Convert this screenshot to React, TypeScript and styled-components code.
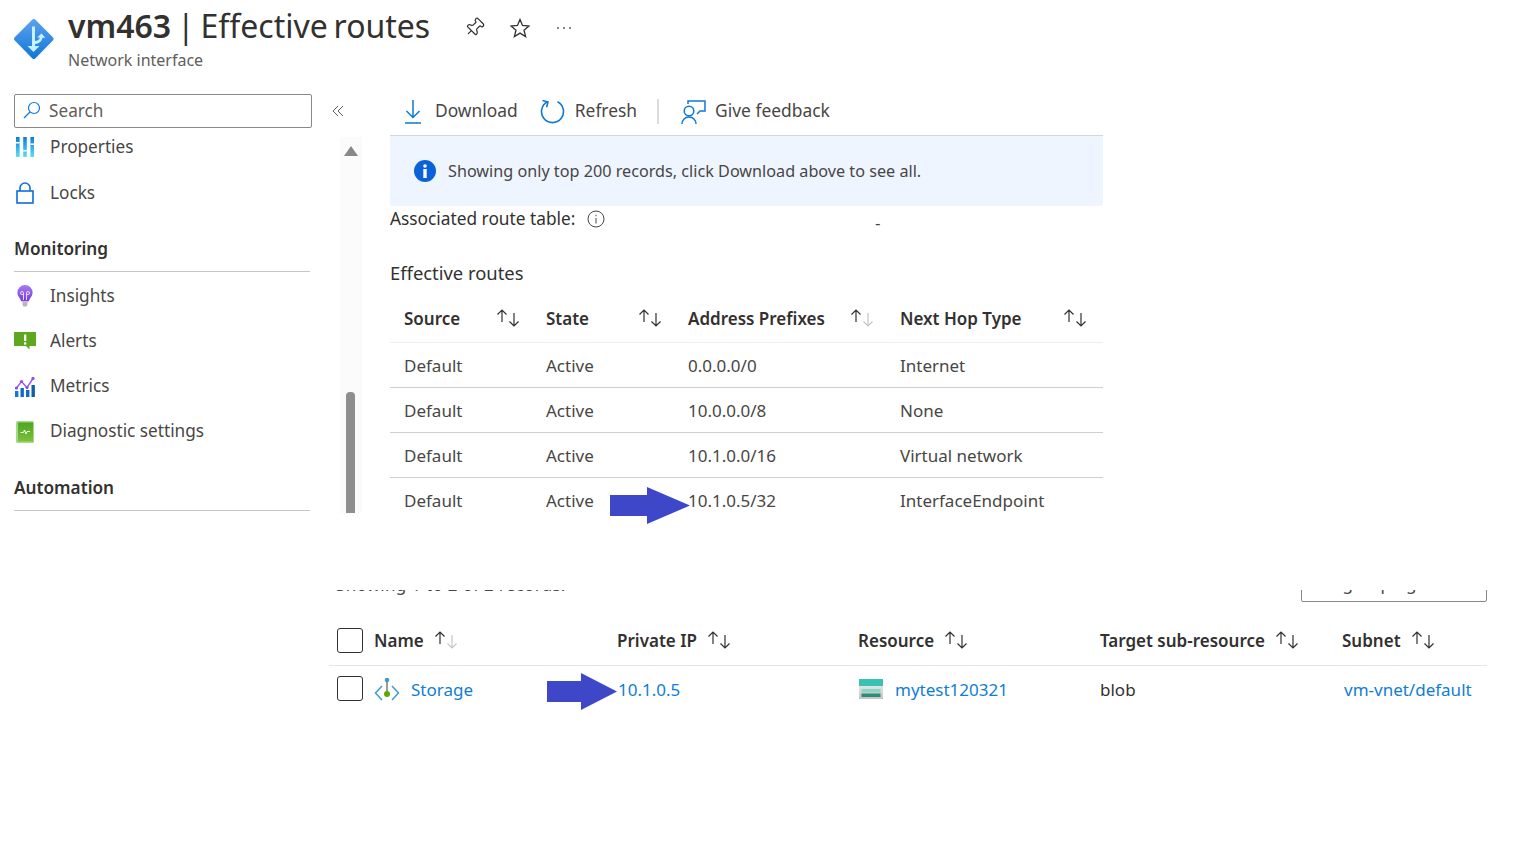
import React from "react";
import styled, { createGlobalStyle } from "styled-components";
import { Pin } from "lucide-react";

const GlobalStyle = createGlobalStyle`
  html, body {
    margin: 0;
    background: #fff;
    overflow: hidden;
  }
  body {
    font-family: "Noto Sans", "Open Sans", sans-serif;
    font-size: 17px;
    color: #323130;
  }
`;

const Page = styled.div`
  position: relative;
  width: 1536px;
  height: 864px;
`;

const Header = styled.header`
  display: flex;
  align-items: flex-start;
  height: 88px;
  padding-left: 14px;
  box-sizing: border-box;
`;

const LogoSlot = styled.div`
  width: 54px;
  padding-top: 19px;
`;

const TitleBlock = styled.div`
  width: 396px;
  padding-top: 4px;
`;

const Title = styled.h1`
  margin: 0;
  font-size: 32px;
  line-height: 44px;
  font-weight: 400;
  word-spacing: -2.5px;
  white-space: nowrap;
  strong {
    font-weight: 600;
  }
`;

const Subtitle = styled.div`
  font-size: 16px;
  line-height: 20px;
  margin-top: 2px;
  color: #605e5c;
`;

const HeaderActions = styled.div`
  display: flex;
  align-items: center;
  gap: 25px;
  padding-top: 17px;
  color: #323130;
`;

const Main = styled.main`
  display: flex;
  align-items: flex-start;
  height: 494px;
  padding-left: 14px;
`;

const Sidebar = styled.nav`
  width: 298px;
  padding-top: 6px;
  font-size: 17.2px;
`;

const SearchBox = styled.div`
  display: flex;
  align-items: center;
  gap: 8px;
  height: 34px;
  box-sizing: border-box;
  padding: 0 0 2px 8px;
  border: 1px solid #8a8886;
  border-radius: 2px;
  color: #605e5c;
`;

const NavGroup = styled.div<{ $gap: number }>`
  display: flex;
  flex-direction: column;
  gap: ${({ $gap }) => $gap}px;
`;

const NavRow = styled.div`
  display: flex;
  align-items: center;
  height: 38px;
  box-sizing: border-box;
  padding-bottom: 2px;
  color: #484644;
`;

const NavIcon = styled.span`
  display: flex;
  justify-content: center;
  width: 22px;
  margin: 2px 14px 0 0;
`;

const NavHeading = styled.div<{ $top: number }>`
  width: 296px;
  margin: ${({ $top }) => $top}px 0 5px;
  padding-bottom: 9px;
  line-height: 26px;
  font-weight: 600;
  border-bottom: 1px solid #c8c6c4;
`;

const CollapseSlot = styled.div`
  width: 28px;
  height: 46px;
  padding-top: 17px;
  display: flex;
  justify-content: flex-end;
  box-sizing: border-box;
  color: #605e5c;
  & > svg {
    margin-right: -4px;
  }
`;

const ScrollTrack = styled.div`
  display: flex;
  flex-direction: column;
  align-items: center;
  width: 22px;
  height: 376px;
  margin: 49px 28px 0 0;
  background: #fbfbfb;
`;

const ScrollUp = styled.div`
  width: 0;
  height: 0;
  margin-top: 9px;
  border-left: 7px solid transparent;
  border-right: 7px solid transparent;
  border-bottom: 10px solid #8a8886;
`;

const ScrollThumb = styled.div`
  width: 9px;
  height: 121px;
  margin: auto 1px 0 0;
  background: #8e8e8e;
  border-radius: 4px 4px 0 0;
`;

const Content = styled.section`
  width: 713px;
`;

const Toolbar = styled.div`
  display: flex;
  align-items: center;
  height: 47px;
  padding-left: 14px;
  border-bottom: 1px solid #d6d6d6;
  font-size: 17.4px;
  color: #484644;
`;

const ToolLabel = styled.span`
  padding-bottom: 3px;
`;

const ToolButton = styled.div<{ $gap: number; $right: number }>`
  display: flex;
  align-items: center;
  gap: ${({ $gap }) => $gap}px;
  margin-right: ${({ $right }) => $right}px;
`;

const ToolDivider = styled.div`
  width: 2px;
  height: 25px;
  margin-right: 22px;
  background: #dcdcdc;
`;

const Banner = styled.div`
  display: flex;
  align-items: center;
  gap: 12px;
  height: 70px;
  padding-left: 24px;
  background: #eef5ff;
  border-radius: 0 0 2px 2px;
  font-size: 16.2px;
  color: #484644;
`;

const AssocRow = styled.div`
  display: flex;
  align-items: center;
  height: 26px;
`;

const AssocLabel = styled.span`
  width: 215px;
  display: flex;
  align-items: center;
  justify-content: space-between;
  white-space: nowrap;
  font-size: 17.3px;
  line-height: 22px;
`;

const AssocValue = styled.span`
  margin-left: 270px;
  padding-top: 6px;
  color: #484644;
`;

const SectionTitle = styled.h2`
  margin: 27px 0 0;
  font-size: 18.4px;
  font-weight: 400;
  line-height: 28px;
`;

const RouteHead = styled.div`
  display: grid;
  grid-template-columns: 116px 116px 186px 187px;
  column-gap: 26px;
  align-items: center;
  height: 56px;
  box-sizing: border-box;
  padding: 7px 0 0 14px;
  border-bottom: 1px solid #eeeeee;
  font-weight: 600;
`;

const HeadCell = styled.div`
  display: flex;
  align-items: center;
  justify-content: space-between;
`;

const RouteRow = styled.div<{ $last?: boolean }>`
  display: grid;
  grid-template-columns: 116px 116px 186px 187px;
  column-gap: 26px;
  align-items: center;
  height: 44px;
  padding-left: 14px;
  border-bottom: 1px solid ${({ $last }) => ($last ? "transparent" : "#cfcfcf")};
  color: #484644;
`;

const Lower = styled.section`
  width: 1158px;
  margin-left: 329px;
`;

const StatusStrip = styled.div`
  display: flex;
  justify-content: space-between;
  align-items: flex-end;
  height: 20px;
`;

const ClippedNote = styled.div`
  height: 6px;
  margin: 0 0 6px 7px;
  overflow: hidden;
  white-space: nowrap;
  & > span {
    display: block;
    margin-top: -17px;
    line-height: 24px;
    letter-spacing: 0.3px;
    color: #484644;
  }
`;

const ClippedBox = styled.div`
  width: 186px;
  height: 12px;
  overflow: hidden;
  display: flex;
  flex-direction: column;
  justify-content: flex-end;
  & > div {
    flex: none;
    height: 34px;
    line-height: 30px;
    padding-left: 13px;
    box-sizing: border-box;
    border: 1px solid #8a8886;
    border-radius: 2px;
    color: #484644;
  }
`;

const EndpointHead = styled.div`
  display: grid;
  grid-template-columns: 37px 243px 241px 242px 242px 1fr;
  align-items: center;
  height: 64px;
  box-sizing: border-box;
  padding: 13px 0 0 8px;
  border-bottom: 1px solid #e6e6e6;
  font-weight: 600;
`;

const EndpointRow = styled.div`
  display: grid;
  grid-template-columns: 37px 243px 241px 242px 242px 1fr;
  align-items: center;
  height: 46px;
  padding-left: 8px;
`;

const LabelSort = styled.div`
  display: flex;
  align-items: center;
  gap: 10px;
`;

const Checkbox = styled.div<{ $lift?: number }>`
  width: 26px;
  height: 25px;
  box-sizing: border-box;
  margin-bottom: ${({ $lift }) => $lift ?? 0}px;
  border: 1px solid #323130;
  border-radius: 3px;
`;

const ResourceLink = styled.a<{ $gap?: number; $shift?: number }>`
  display: flex;
  align-items: center;
  gap: ${({ $gap }) => $gap ?? 0}px;
  margin-left: ${({ $shift }) => $shift ?? 0}px;
  color: #0f7ed4;
  text-decoration: none;
`;

const Callout = styled.svg<{ $x: number; $y: number }>`
  position: absolute;
  left: ${({ $x }) => $x}px;
  top: ${({ $y }) => $y}px;
`;

function SortIcon({ dim }: { dim?: boolean }) {
  return (
    <svg width="24" height="20" viewBox="0 0 24 20" fill="none" strokeWidth="1.2">
      <path d="M6 14V2M1.5 6.5 6 2l4.5 4.5" stroke="#323130" />
      <path
        d="M18 5v13M13.5 13.5 18 18l4.5-4.5"
        stroke={dim ? "#c8c6c4" : "#323130"}
      />
    </svg>
  );
}

function ArrowCallout({ x, y, w, h, head, bar }: { x: number; y: number; w: number; h: number; head: number; bar: number }) {
  const inset = (h - bar) / 2;
  return (
    <Callout $x={x} $y={y} width={w} height={h} viewBox={`0 0 ${w} ${h}`}>
      <path
        d={`M0 ${inset}H${w - head}V0L${w} ${h / 2}L${w - head} ${h}V${h - inset}H0Z`}
        fill="#3f47c9"
      />
    </Callout>
  );
}

function NicLogo() {
  return (
    <svg width="40" height="40" viewBox="0 0 40 40">
      <defs>
        <linearGradient id="nic" x1="0" y1="0" x2="0" y2="1">
          <stop offset="0" stopColor="#5ea0ef" />
          <stop offset="1" stopColor="#0f78d8" />
        </linearGradient>
      </defs>
      <path d="M17.9 1 1 18a2.6 2.6 0 0 0 0 3.8L17.9 39a2.6 2.6 0 0 0 3.8 0L38.6 21.8a2.6 2.6 0 0 0 0-3.8L21.7 1a2.6 2.6 0 0 0-3.8 0Z" fill="url(#nic)" />
      <path d="M18 7.5h3V27h4.5L19.5 33l-6-6H18Z" fill="#c6f1ff" />
      <path d="M20.5 22c3.5-.4 4.6-1.5 5.4-3.6H23l4.6-4 3.6 4.4h-2.7c-1 4-3.6 6-8 6.4Z" fill="#c6f1ff" />
    </svg>
  );
}

function PropertiesIcon() {
  return (
    <svg width="18" height="20" viewBox="0 0 18 20">
      <defs>
        <linearGradient id="props" x1="0" y1="0" x2="0" y2="1">
          <stop offset="0" stopColor="#0a7cd8" />
          <stop offset="1" stopColor="#5ce0f5" />
        </linearGradient>
      </defs>
      <rect x="0" y="0" width="3.6" height="20" fill="url(#props)" />
      <rect x="7.2" y="0" width="3.6" height="20" fill="url(#props)" />
      <rect x="14.4" y="0" width="3.6" height="20" fill="url(#props)" />
      <rect x="0" y="5" width="3.6" height="1.5" fill="#fff" />
      <rect x="7.2" y="13" width="3.6" height="1.5" fill="#fff" />
      <rect x="14.4" y="6.5" width="3.6" height="1.5" fill="#fff" />
    </svg>
  );
}

function LockIcon() {
  return (
    <svg width="18" height="22" viewBox="0 0 18 22" fill="none" stroke="#0b6fde" strokeWidth="1.6">
      <rect x="1" y="9" width="16" height="12" />
      <path d="M4 9V6a5 5 0 0 1 10 0v3" />
    </svg>
  );
}

function InsightsIcon() {
  return (
    <svg width="16" height="22" viewBox="0 0 16 22">
      <defs>
        <linearGradient id="bulb" x1="0" y1="0" x2="0" y2="1">
          <stop offset="0" stopColor="#a67af4" />
          <stop offset="1" stopColor="#773adc" />
        </linearGradient>
      </defs>
      <path d="M8 0a7.6 7.6 0 0 0-7.6 7.6c0 3 1.7 4.6 2.8 6.3.6 1 .8 1.6.9 2.4h7.8c.1-.8.3-1.4.9-2.4 1.1-1.7 2.8-3.3 2.8-6.3A7.6 7.6 0 0 0 8 0Z" fill="url(#bulb)" />
      <path d="M5.5 16.5h5V20l-1 1.5h-3l-1-1.5Z" fill="#b8b6c4" />
      <path d="M6.5 15V8M9.5 15V8M6.5 8a1.5 1.5 0 1 0-1.5 1.5h1.5M9.5 8a1.5 1.5 0 1 1 1.5 1.5H9.5" stroke="#e6dcfb" strokeWidth="1" fill="none" />
    </svg>
  );
}

function AlertIcon() {
  return (
    <svg width="22" height="18" viewBox="0 0 22 18">
      <path d="M.5 0h21a.5.5 0 0 1 .5.5v13a.5.5 0 0 1-.5.5h-6v3.5L12 14H.5a.5.5 0 0 1-.5-.5V.5A.5.5 0 0 1 .5 0Z" fill="#5ea81e" />
      <rect x="10" y="2.5" width="2.3" height="6.5" fill="#fff" />
      <rect x="10" y="10.3" width="2.3" height="2.3" fill="#fff" />
    </svg>
  );
}

function MetricsIcon() {
  return (
    <svg width="20" height="20" viewBox="0 0 20 20">
      <rect x="0" y="14" width="3.4" height="6" fill="#0f78d8" />
      <rect x="5.5" y="11" width="3.4" height="9" fill="#0f6cc0" />
      <rect x="11" y="13" width="3.4" height="7" fill="#0f6cc0" />
      <rect x="16.5" y="8" width="3.4" height="12" fill="#0f5fa8" />
      <path d="M1.5 11 6.5 4.5 12 10.5 18 1.5" stroke="#9a5ae8" strokeWidth="1.4" fill="none" />
      <circle cx="1.5" cy="11" r="1.6" fill="#8d4fe0" />
      <circle cx="6.5" cy="4.5" r="1.6" fill="#8d4fe0" />
      <circle cx="12" cy="10.5" r="1.6" fill="#8d4fe0" />
      <circle cx="18" cy="1.5" r="1.6" fill="#8d4fe0" />
    </svg>
  );
}

function DiagnosticIcon() {
  return (
    <svg width="18" height="22" viewBox="0 0 18 22">
      <defs>
        <linearGradient id="book" x1="0" y1="0" x2="0" y2="1">
          <stop offset="0" stopColor="#4aa61e" />
          <stop offset="1" stopColor="#7cc23a" />
        </linearGradient>
      </defs>
      <rect x="0" y="0" width="18" height="22" rx="1.5" fill="#a8d68a" />
      <rect x="2" y="1.5" width="15" height="19" fill="url(#book)" />
      <path d="M4.5 11.5h3l1-2.5 1.5 4 1-2.5h3" stroke="#fff" strokeWidth="1" fill="none" />
    </svg>
  );
}

function SearchIcon() {
  return (
    <svg width="18" height="18" viewBox="0 0 18 18" fill="none" stroke="#0f78d4" strokeWidth="1.2">
      <circle cx="11" cy="7" r="5.5" />
      <path d="M7 11 1 17" />
    </svg>
  );
}

function CollapseIcon() {
  return (
    <svg width="12" height="12" viewBox="0 0 12 12" fill="none" stroke="#605e5c" strokeWidth="1">
      <path d="M6 1 1 6l5 5M11 1 6 6l5 5" />
    </svg>
  );
}

function DownloadIcon() {
  return (
    <svg width="18" height="24" viewBox="0 0 18 24" fill="none" stroke="#0f78d4" strokeWidth="1.5">
      <path d="M9 0v17M2.5 11 9 17.5 15.5 11M1 23h16" />
    </svg>
  );
}

function RefreshIcon() {
  return (
    <svg width="25" height="25" viewBox="0 0 25 25" fill="none" stroke="#0f78d4" strokeWidth="1.6">
      <path d="M7.5 2.8a11 11 0 1 0 10 0" />
      <path d="M2.5 1.5 8 3l-1.4 5.2" />
    </svg>
  );
}

function FeedbackIcon() {
  return (
    <svg width="25" height="24" viewBox="0 0 25 24" fill="none" stroke="#0f78d4" strokeWidth="1.5">
      <circle cx="8" cy="11" r="4.8" />
      <path d="M1 24c0-4 3-7 7-7s7 3 7 7" />
      <path d="M7 4V1h17v10h-5l-3 3" />
    </svg>
  );
}

function InfoFilledIcon() {
  return (
    <svg width="22" height="22" viewBox="0 0 22 22">
      <circle cx="11" cy="11" r="11" fill="#0b62d8" />
      <circle cx="11" cy="6" r="1.8" fill="#fff" />
      <rect x="9.3" y="9" width="3.4" height="9" fill="#fff" />
    </svg>
  );
}

function InfoOutlineIcon() {
  return (
    <svg width="18" height="18" viewBox="0 0 18 18" fill="none" stroke="#484644" strokeWidth="1">
      <circle cx="9" cy="9" r="8" />
      <path d="M9 8v5.5M9 4.8v1.4" />
    </svg>
  );
}

function EndpointIcon() {
  return (
    <svg width="26" height="25" viewBox="0 0 26 25" fill="none">
      <path d="M8 9 1.5 16 8 23M18 9l6.5 7L18 23" stroke="#3e9bd0" strokeWidth="1.5" />
      <path d="M13 3v14" stroke="#7a7a7a" strokeWidth="1.5" />
      <circle cx="13" cy="3" r="2.3" fill="#3e9bd0" />
      <circle cx="13" cy="17" r="3" fill="#5ea800" />
    </svg>
  );
}

function StorageIcon() {
  return (
    <svg width="24" height="20" viewBox="0 0 24 20">
      <defs>
        <linearGradient id="store" x1="0" y1="0" x2="0" y2="1">
          <stop offset="0" stopColor="#f4f4f4" />
          <stop offset="1" stopColor="#c4c4c4" />
        </linearGradient>
      </defs>
      <rect x="0" y="0" width="24" height="20" fill="url(#store)" />
      <rect x="0" y="0" width="24" height="7" fill="#37c2b1" />
      <rect x="2.5" y="10" width="19" height="3.5" fill="#8ad6c6" />
      <rect x="2.5" y="14.5" width="19" height="3.5" fill="#2f8a78" />
    </svg>
  );
}

function StarIcon() {
  return (
    <svg width="20" height="20" viewBox="0 0 20 20" fill="none" stroke="#323130" strokeWidth="1.3" strokeLinejoin="miter">
      <path d="M10 1.5 12.5 7.5 19 8 14 12.2 15.6 18.5 10 15.1 4.4 18.5 6 12.2 1 8 7.5 7.5Z" />
    </svg>
  );
}

function MoreIcon() {
  return (
    <svg width="18" height="6" viewBox="0 0 18 6" fill="#605e5c">
      <circle cx="3" cy="3" r="1" />
      <circle cx="9" cy="3" r="1" />
      <circle cx="15" cy="3" r="1" />
    </svg>
  );
}

const routes = [
  { prefix: "0.0.0.0/0", hop: "Internet" },
  { prefix: "10.0.0.0/8", hop: "None" },
  { prefix: "10.1.0.0/16", hop: "Virtual network" },
  { prefix: "10.1.0.5/32", hop: "InterfaceEndpoint" },
];

export default function App() {
  return (
    <Page>
      <GlobalStyle />
      <Header>
        <LogoSlot>
          <NicLogo />
        </LogoSlot>
        <TitleBlock>
          <Title>
            <strong>vm463</strong> | Effective routes
          </Title>
          <Subtitle>Network interface</Subtitle>
        </TitleBlock>
        <HeaderActions>
          <Pin size={21} strokeWidth={1.4} style={{ transform: "rotate(45deg)" }} />
          <StarIcon />
          <MoreIcon />
        </HeaderActions>
      </Header>

      <Main>
        <Sidebar>
          <SearchBox>
            <SearchIcon />
            Search
          </SearchBox>
          <NavGroup $gap={8}>
            <NavRow>
              <NavIcon><PropertiesIcon /></NavIcon>Properties
            </NavRow>
            <NavRow>
              <NavIcon><LockIcon /></NavIcon>Locks
            </NavRow>
          </NavGroup>
          <NavHeading $top={24}>Monitoring</NavHeading>
          <NavGroup $gap={7.3}>
            <NavRow>
              <NavIcon><InsightsIcon /></NavIcon>Insights
            </NavRow>
            <NavRow>
              <NavIcon><AlertIcon /></NavIcon>Alerts
            </NavRow>
            <NavRow>
              <NavIcon><MetricsIcon /></NavIcon>Metrics
            </NavRow>
            <NavRow>
              <NavIcon><DiagnosticIcon /></NavIcon>Diagnostic settings
            </NavRow>
          </NavGroup>
          <NavHeading $top={24}>Automation</NavHeading>
        </Sidebar>
        <CollapseSlot>
          <CollapseIcon />
        </CollapseSlot>
        <ScrollTrack>
          <ScrollUp />
          <ScrollThumb />
        </ScrollTrack>
        <Content>
          <Toolbar>
            <ToolButton $gap={13} $right={22}>
              <DownloadIcon />
              <ToolLabel>Download</ToolLabel>
            </ToolButton>
            <ToolButton $gap={10} $right={20}>
              <RefreshIcon />
              <ToolLabel>Refresh</ToolLabel>
            </ToolButton>
            <ToolDivider />
            <ToolButton $gap={9} $right={0}>
              <FeedbackIcon />
              <ToolLabel>Give feedback</ToolLabel>
            </ToolButton>
          </Toolbar>
          <Banner>
            <InfoFilledIcon />
            Showing only top 200 records, click Download above to see all.
          </Banner>
          <AssocRow>
            <AssocLabel>
              <span>Associated route table:</span>
              <InfoOutlineIcon />
            </AssocLabel>
            <AssocValue>-</AssocValue>
          </AssocRow>
          <SectionTitle>Effective routes</SectionTitle>
          <RouteHead>
            <HeadCell>Source<SortIcon /></HeadCell>
            <HeadCell>State<SortIcon /></HeadCell>
            <HeadCell>Address Prefixes<SortIcon dim /></HeadCell>
            <HeadCell>Next Hop Type<SortIcon /></HeadCell>
          </RouteHead>
          {routes.map((route, i) => (
            <RouteRow key={route.prefix} $last={i === routes.length - 1}>
              <span>Default</span>
              <span>Active</span>
              <span>{route.prefix}</span>
              <span>{route.hop}</span>
            </RouteRow>
          ))}
        </Content>
      </Main>

      <Lower>
        <StatusStrip>
          <ClippedNote>
            <span>Showing 1 to 2 of 2 records.</span>
          </ClippedNote>
          <ClippedBox>
            <div>No grouping</div>
          </ClippedBox>
        </StatusStrip>
        <EndpointHead>
          <Checkbox />
          <LabelSort>Name<SortIcon dim /></LabelSort>
          <LabelSort>Private IP<SortIcon /></LabelSort>
          <LabelSort>Resource<SortIcon /></LabelSort>
          <LabelSort>Target sub-resource<SortIcon /></LabelSort>
          <LabelSort>Subnet<SortIcon /></LabelSort>
        </EndpointHead>
        <EndpointRow>
          <Checkbox $lift={2} />
          <ResourceLink $gap={11}>
            <EndpointIcon />
            Storage
          </ResourceLink>
          <ResourceLink $shift={1}>10.1.0.5</ResourceLink>
          <ResourceLink $gap={12} $shift={1}>
            <StorageIcon />
            mytest120321
          </ResourceLink>
          <span>blob</span>
          <ResourceLink $shift={2}>vm-vnet/default</ResourceLink>
        </EndpointRow>
      </Lower>

      <ArrowCallout x={610} y={487} w={80} h={37} head={43} bar={21} />
      <ArrowCallout x={547} y={673} w={70} h={37} head={36} bar={21} />
    </Page>
  );
}
